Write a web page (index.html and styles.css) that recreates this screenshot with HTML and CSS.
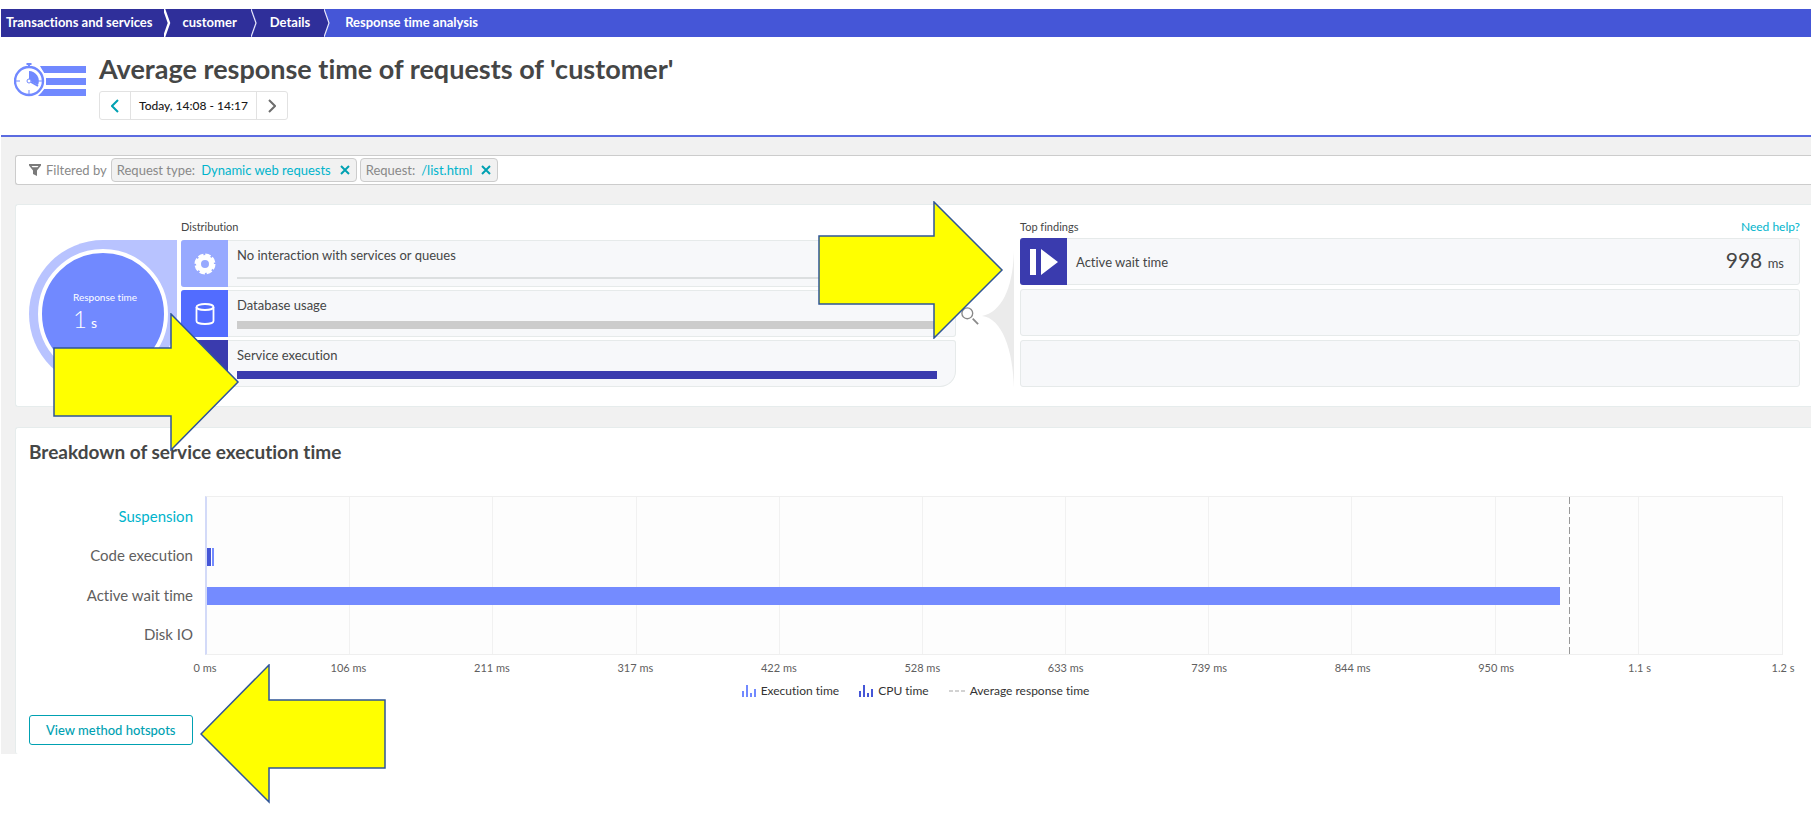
FILE: index.html
```html
<!DOCTYPE html>
<html lang="en">
<head>
<meta charset="utf-8">
<title>Response time analysis</title>
<link rel="stylesheet" href="styles.css">
</head>
<body>
<svg class="defs" aria-hidden="true">
  <symbol id="bars" viewBox="0 0 14 12"><path d="M0 6h2v6H0zM4 0h2v12H4zM8 8h2v4H8zM12 4h2v8h-2z"/></symbol>
  <symbol id="close" viewBox="0 0 10 10"><path d="M1 1l8 8M9 1l-8 8" fill="none" stroke="currentColor" stroke-width="2"/></symbol>
</svg>

<nav class="crumbs" aria-label="Breadcrumb">
  <a class="crumb" href="#">Transactions and services</a>
  <svg class="crumb-sep" viewBox="0 0 7 28"><path class="crumb-fill" d="M0 0h1l5 14-5 14H0z"/><path class="crumb-rest" d="M1 0h6v28H1l5-14z"/><path class="crumb-line thick" d="M0 0l5 14-5 14"/></svg>
  <a class="crumb" href="#">customer</a>
  <svg class="crumb-sep" viewBox="0 0 7 28"><path class="crumb-fill" d="M0 0h1l5 14-5 14H0z"/><path class="crumb-rest" d="M1 0h6v28H1l5-14z"/><path class="crumb-line" d="M0 0l5 14-5 14"/></svg>
  <a class="crumb" href="#">Details</a>
  <svg class="crumb-sep" viewBox="0 0 7 28"><path class="crumb-fill" d="M0 0l5 14-5 14z"/><path class="crumb-line" d="M0 0l5 14-5 14"/></svg>
  <span class="crumb current" aria-current="page">Response time analysis</span>
</nav>

<header class="page-head">
  <svg class="head-icon" viewBox="0 0 72 35" aria-hidden="true">
    <g fill="#7189ff"><path d="M26 3h46v7H30zM32 15h40v7H32zM30 26h42v7H24z"/></g>
    <circle cx="15" cy="18" r="17" fill="#fff"/>
    <circle cx="15" cy="18" r="14" fill="none" stroke="#7189ff" stroke-width="2.400"/>
    <path d="M12.500 0h5v2H16v3h-2V2h-1.500zM15 8a10 10 0 0 1 9 14l-6-3-3-3z" fill="#7189ff"/>
    <path d="M15 27v4M2 18h4M24 18h4" stroke="#7189ff"/>
    <circle cx="15" cy="18" r="2" fill="#fff" stroke="#7189ff"/>
    <path d="M17 19l7 4" stroke="#7189ff" stroke-width="2"/>
  </svg>
  <div class="head-main">
    <h1>Average response time of requests of 'customer'</h1>
    <div class="timeframe">
      <button class="tf-step prev" aria-label="Previous"><svg viewBox="0 0 8 14"><path d="M7 1L1 7l6 6"/></svg></button>
      <button class="tf-label">Today, 14:08 - 14:17</button>
      <button class="tf-step next" aria-label="Next"><svg viewBox="0 0 8 14"><path d="M1 1l6 6-6 6"/></svg></button>
    </div>
  </div>
</header>

<main class="content">
  <div class="filter">
    <svg class="funnel" viewBox="0 0 12 12" aria-hidden="true"><path d="M0 0h12v1.500L8 6.500V12L4 10V6.500L0 1.500z"/><path d="M2.500 2h7L8.500 3.300h-5z" fill="#fff"/></svg>
    <span class="filter-label">Filtered by</span>
    <span class="chip">Request type: <a href="#">Dynamic web requests</a><button aria-label="Remove request type"><svg viewBox="0 0 10 10"><use href="#close"/></svg></button></span>
    <span class="chip">Request: <a href="#">/list.html</a><button aria-label="Remove request"><svg viewBox="0 0 10 10"><use href="#close"/></svg></button></span>
  </div>

  <section class="card overview">
    <div class="gauge"><div class="gauge-disc">
      <span class="gauge-label">Response time</span>
      <span class="gauge-value">1<small>s</small></span>
    </div></div>

    <div class="distribution">
      <h3>Distribution</h3>
      <a class="dist" href="#">
        <span class="tile soft"><svg viewBox="0 0 22 22" width="22" height="22"><circle cx="11" cy="11" r="6.500" fill="none" stroke="#fff" stroke-width="5"/><circle cx="11" cy="11" r="8.500" fill="none" stroke="#fff" stroke-width="4" stroke-linejoin="round" stroke-dasharray="5 1.676"/></svg></span>
        <span class="dist-body"><span>No interaction with services or queues</span><span class="track thin"></span></span>
      </a>
      <a class="dist" href="#">
        <span class="tile mid"><svg viewBox="0 0 20 22" width="20" height="22"><g fill="none" stroke="#fff" stroke-width="1.800"><ellipse cx="10" cy="4" rx="8.500" ry="3"/><path d="M1.500 4v14c0 1.700 3.800 3 8.500 3s8.500-1.300 8.500-3V4"/></g></svg></span>
        <span class="dist-body"><span>Database usage</span><span class="track"></span></span>
      </a>
      <a class="dist last" href="#">
        <span class="tile deep"></span>
        <span class="dist-body"><span>Service execution</span><span class="track full"></span></span>
      </a>
    </div>

    <div class="link">
      <svg class="lens" viewBox="0 0 20 20" aria-hidden="true"><circle cx="7" cy="7" r="6" fill="none" stroke="#898989" stroke-width="1.500"/><path d="M13 13l6 6" stroke="#898989" stroke-width="2"/></svg>
      <svg class="fan" viewBox="0 0 32 138" aria-hidden="true"><path d="M32 0v138C31 100 20 68 0 66 20 62 31 38 32 0z" fill="#ebebeb"/></svg>
    </div>

    <div class="findings">
      <div class="findings-head"><h3>Top findings</h3><a href="#">Need help?</a></div>
      <a class="finding" href="#">
        <span class="tile deep"><svg viewBox="0 0 30 28" width="30" height="28"><path d="M1 1h6v26H1zM12 1l17 13-17 13z" fill="#fff"/></svg></span>
        <span class="finding-name">Active wait time</span>
        <span class="finding-value">998 <small>ms</small></span>
      </a>
      <div class="finding"></div>
      <div class="finding"></div>
    </div>
  </section>

  <section class="card breakdown">
    <h2>Breakdown of service execution time</h2>
    <div class="chart">
      <div class="row-labels"><a href="#">Suspension</a><span>Code execution</span><span>Active wait time</span><span>Disk IO</span></div>
      <div class="plot">
        <div class="grid"><i></i><i></i><i></i><i></i><i></i><i></i><i></i><i></i><i></i><i></i><i></i></div>
        <div class="lanes">
          <div class="lane"></div>
          <div class="lane"><div class="bar split" style="width:0.45%"></div></div>
          <div class="lane"><div class="bar" style="width:85.9%"></div></div>
          <div class="lane"></div>
        </div>
        <div class="average" style="left:86.5%"></div>
      </div>
      <div class="ticks"><span>0 ms</span><span>106 ms</span><span>211 ms</span><span>317 ms</span><span>422 ms</span><span>528 ms</span><span>633 ms</span><span>739 ms</span><span>844 ms</span><span>950 ms</span><span>1.1 s</span><span>1.2 s</span></div>
    </div>
    <div class="legend">
      <span><svg class="lg exec" viewBox="0 0 14 12"><use href="#bars"/></svg>Execution time</span>
      <span><svg class="lg cpu" viewBox="0 0 14 12"><use href="#bars"/></svg>CPU time</span>
      <span><svg class="lg-dash" viewBox="0 0 16 2"><path d="M0 1h16" stroke="#a5a5a5" stroke-width="1" stroke-dasharray="4 2"/></svg>Average response time</span>
    </div>
    <button class="hotspots">View method hotspots</button>
  </section>
</main>

<svg class="pointer pointer-service" viewBox="0 0 187 138" aria-hidden="true"><path d="M1 35h117V1l67 68-67 68v-34H1z"/></svg>
<svg class="pointer pointer-finding" viewBox="0 0 187 138" aria-hidden="true"><path d="M1 35h115V1l68 68-68 68v-34H1z"/></svg>
<svg class="pointer pointer-hotspots" viewBox="0 0 187 140" aria-hidden="true"><path d="M1 70L69 1v35h116v68H69v34z"/></svg>
</body>
</html>
```
FILE: styles.css
```css
* { box-sizing: border-box; }
body {
  margin: 0;
  padding: 9px 1px 0;
  min-height: 100vh;
  position: relative;
  background: #fff;
  color: #454646;
  font: 13px/20px Lato, "Open Sans", sans-serif;
  font-variant-ligatures: none;
}
a { color: #00b4cc; text-decoration: none; }
h1, h2, h3 { margin: 0; }
button { font: inherit; background: none; border: 0; padding: 0; color: inherit; cursor: pointer; }
svg { display: block; flex: none; }
.defs { position: absolute; width: 0; height: 0; }

.crumbs { display: flex; height: 28px; background: #4556d7; font-weight: 700; line-height: 26px; }
.crumb { color: #fff; background: #2f2f9a; padding: 0 14px 0 12px; }
.crumb:first-child { padding: 0 11px 0 5px; }
.crumb.current { background: none; padding-left: 14px; }
.crumb-sep { width: 7px; height: 28px; }
.crumb-fill, .crumb-rest { fill: #2f2f9a; }
.crumb-line { fill: none; stroke: #e8e8fb; stroke-width: 1.2; }
.crumb-line.thick { stroke: #fff; stroke-width: 2.4; }

.page-head { display: flex; gap: 13px; padding: 16px 13px 15px; border-bottom: 2px solid #5b6be0; }
.head-icon { width: 72px; height: 35px; margin-top: 10px; }
h1 { font-size: 27px; line-height: 32px; font-weight: 700; }
.timeframe { display: inline-flex; margin-top: 6px; height: 29px; border: 1px solid #e2e2e2; border-radius: 3px; }
.tf-step { width: 30px; display: grid; place-items: center; }
.tf-step svg { width: 8px; height: 14px; fill: none; stroke: #6d6d6d; stroke-width: 2; }
.tf-step.prev svg { stroke: #00a1b2; }
.tf-label { padding: 0 8px; border: solid #e2e2e2; border-width: 0 1px; color: #191919; font-weight: 500; font-size: 12px; }

.content { background: #f1f1f1; padding: 18px 0 0 14px; }
.filter { display: flex; align-items: center; height: 30px; padding-left: 13px; background: #fff; border: 1px solid #ccc; border-right: 0; border-radius: 3px 0 0 3px; color: #898989; }
.funnel { width: 12px; height: 12px; fill: #7a7a7a; margin-right: 5px; }
.filter-label { margin-right: 4px; }
.chip { display: flex; align-items: center; gap: 6px; height: 24px; padding: 0 6px 0 5px; margin-right: 3px; border: 1px solid #ccc; border-radius: 4px; background: #f1f1f1; white-space: nowrap; }
.chip svg { width: 10px; height: 10px; color: #00a1b2; margin-left: 3px; }

.card { background: #fff; border: 1px solid #e6ecec; border-right: 0; border-radius: 3px 0 0 3px; }
.overview { display: flex; margin-top: 19px; padding: 14px 11px 0 13px; height: 203px; }
.gauge { flex: none; width: 148px; height: 148px; margin-top: 21px; border-radius: 50% 0 50% 50%; background: #b8c3ff; display: grid; place-items: center; }
.gauge-disc { width: 130px; height: 130px; border: 4px solid #fff; border-radius: 50%; background: #7189ff; color: #fff; padding: 37px 0 0 31px; }
.gauge-label { display: block; font-size: 10px; line-height: 14px; white-space: nowrap; }
.gauge-value { display: block; font-size: 24px; line-height: 30px; font-weight: 300; }
.gauge-value small { font-size: 14px; font-weight: 400; margin-left: 4px; }
.distribution { flex: 155 1 0; margin-left: 4px; }
.findings { flex: 156 1 0; }
h3 { font-size: 11px; line-height: 16px; font-weight: 400; color: #454646; }
.distribution h3 { margin-bottom: 5px; }
.dist, .finding { display: flex; height: 47px; margin-bottom: 3px; background: #f7f8fa; border: 1px solid #e6eaea; border-radius: 3px; color: #454646; }
.dist.last { border-bottom-right-radius: 16px; }
.dist { border-left: 0; }
.tile { flex: none; width: 47px; margin: -1px 0; border-radius: 3px 0 0 3px; display: grid; place-items: center; }
.tile.soft { background: #97a9ff; }
.tile.mid { background: #526cff; }
.tile.deep { background: #3a3bae; }
.dist-body { flex: 1; display: flex; flex-direction: column; justify-content: space-between; padding: 4px 18px 7px 9px; }
.track { height: 8px; background: #ccc; }
.track.thin { height: 2px; background: #dcdfe0; }
.track.full { background: #3a3bae; }
.link { flex: none; width: 64px; display: flex; align-items: flex-start; justify-content: space-between; padding: 31px 6px 0 5px; }
.lens { width: 18px; height: 18px; margin-top: 57px; }
.fan { width: 32px; height: 138px; }
.findings-head { display: flex; justify-content: space-between; font-size: 12px; line-height: 16px; margin-bottom: 3px; }
.finding { align-items: stretch; margin-bottom: 4px; }
.finding .tile { margin-left: -1px; }
.finding-name { flex: 1; align-self: center; padding-left: 9px; }
.finding-value { align-self: center; padding-right: 15px; font-size: 21px; }
.finding-value small { font-size: 13px; }

.breakdown { margin-top: 20px; padding: 13px 28px 9px 13px; border-bottom: 0; }
h2 { font-size: 19px; line-height: 22px; font-weight: 700; }
.chart { display: grid; grid-template-columns: 164px 1fr; column-gap: 12px; margin-top: 33px; }
.row-labels { display: grid; grid-template-rows: repeat(4, 1fr); align-items: center; text-align: right; padding: 0 0 1px; font-size: 15px; color: #5f6060; }
.plot { position: relative; height: 159px; border: 1px solid #efefef; border-left: 2px solid #d3daf8; background: #fdfdfd; }
.grid { position: absolute; inset: 0; display: grid; grid-template-columns: repeat(11, 1fr); }
.grid i { border-right: 1px solid #f1f1f1; }
.grid i:last-child { border: 0; }
.lanes { position: absolute; inset: 1px 0 0; display: grid; grid-template-rows: repeat(4, 1fr); align-items: center; }
.bar { height: 18px; background: #748bff; }
.bar.split { background: linear-gradient(90deg, #4556d7 4px, #fff 4px 5px, #748bff 5px); }
.average { position: absolute; top: 0; bottom: 0; width: 1px; background: repeating-linear-gradient(#999 0 7px, transparent 7px 10px); }
.ticks { grid-column: 2; display: flex; justify-content: space-between; margin-top: 3px; font-size: 11px; color: #5f6060; }
.ticks span { width: 0; display: flex; justify-content: center; white-space: nowrap; }
.legend { display: flex; justify-content: center; gap: 20px; margin: 4px 0 15px; padding-left: 19px; font-size: 12px; line-height: 18px; color: #333; }
.legend > span { display: flex; align-items: center; gap: 5px; }
.lg { width: 14px; height: 12px; }
.exec { fill: #7189ff; }
.cpu { fill: #4556d7; }
.lg-dash { width: 16px; height: 2px; }
.hotspots { height: 30px; padding: 0 16px; border: 1px solid #00a1b2; border-radius: 3px; color: #00a1b2; font-weight: 500; }

.pointer { position: absolute; width: 187px; height: 138px; fill: #ff0; stroke: #2f5597; stroke-width: 1.5; }
.pointer-service { left: 53px; top: 313px; }
.pointer-finding { left: 818px; top: 201px; }
.pointer-hotspots { left: 200px; top: 664px; height: 140px; }
```
